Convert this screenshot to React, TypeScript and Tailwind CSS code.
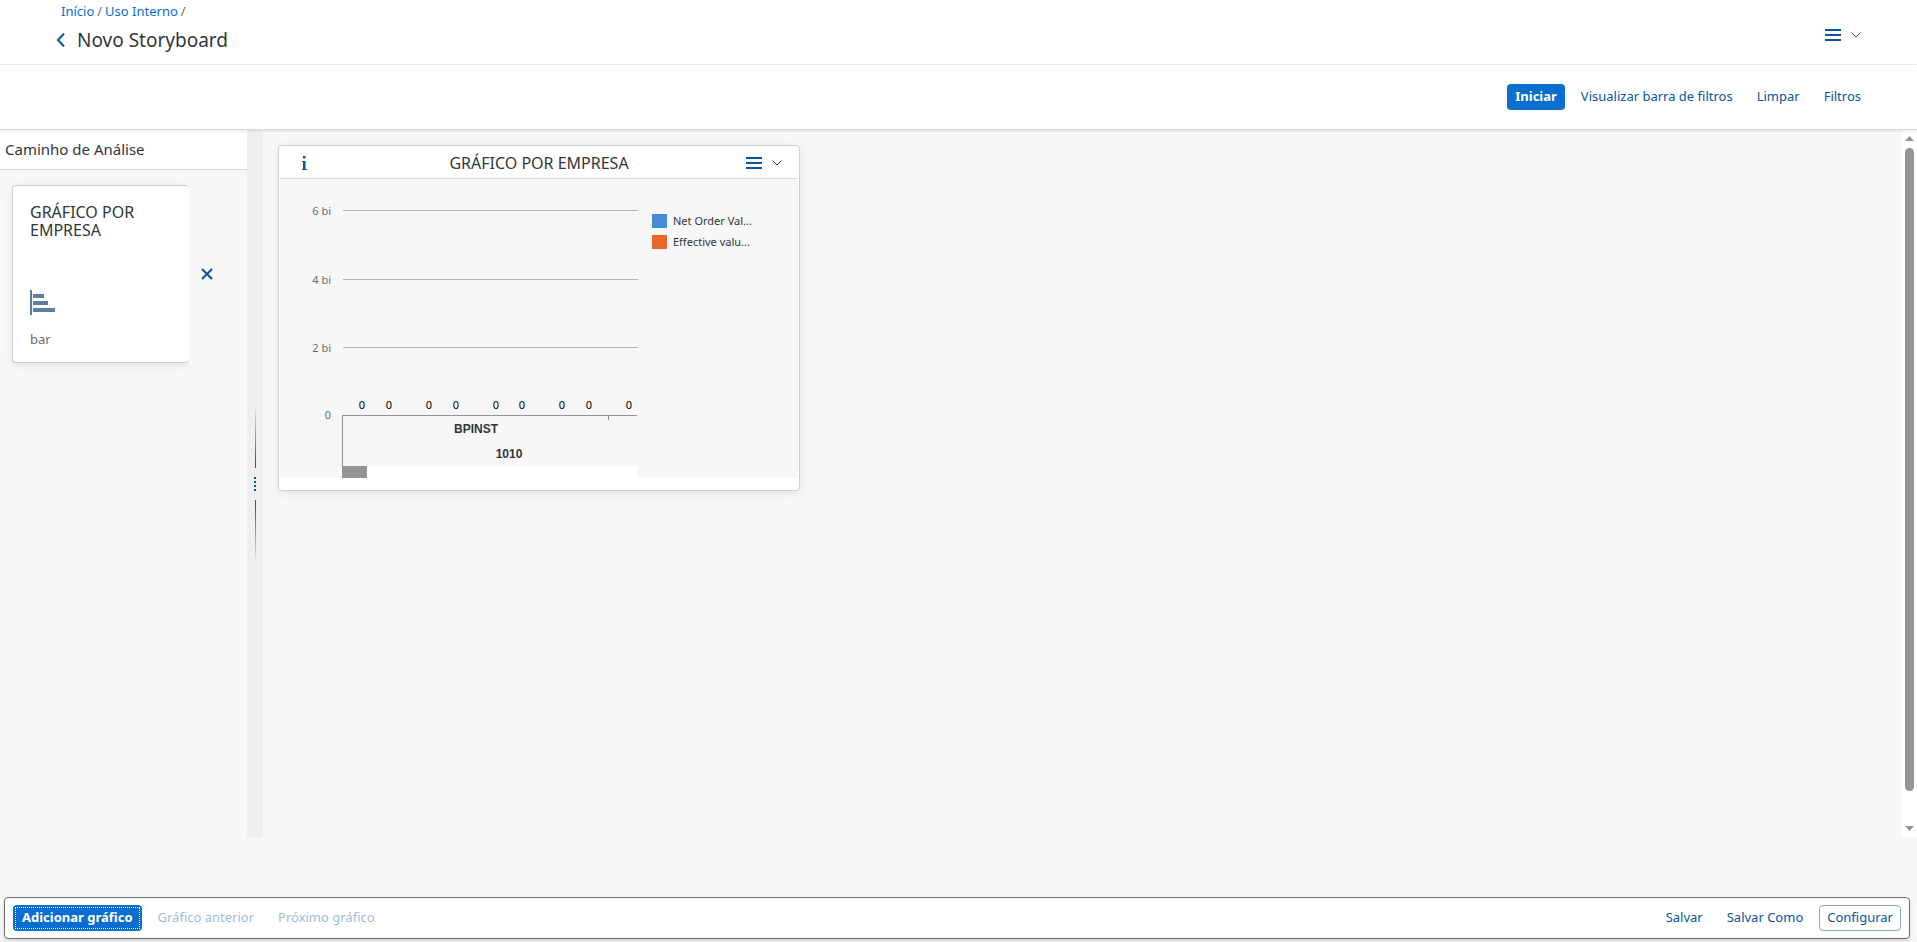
import type { ReactNode } from 'react';

const VALUE_LABEL_X = [82, 109, 149, 176, 216, 242, 282, 309, 349];

const GRID_LINES = [
  { label: '6 bi', y: 31 },
  { label: '4 bi', y: 100 },
  { label: '2 bi', y: 168 },
];

function MenuButton({ label }: { label: string }) {
  return (
    <button type="button" aria-label={label} className="flex h-6 items-center gap-2.5">
      <svg width="16" height="12" viewBox="0 0 16 12" aria-hidden="true">
        <path d="M0 1h16M0 6h16M0 11h16" stroke="#0854a0" strokeWidth="2" />
      </svg>
      <svg width="10" height="6" viewBox="0 0 10 6" aria-hidden="true">
        <path d="M0.5 0.5L5 5L9.5 0.5" fill="none" stroke="#0854a0" />
      </svg>
    </button>
  );
}

function TextButton({ children, disabled = false }: { children: ReactNode; disabled?: boolean }) {
  return (
    <button
      type="button"
      disabled={disabled}
      className="h-[26px] rounded px-2 text-[#0854a0] disabled:opacity-40"
    >
      {children}
    </button>
  );
}

function BarChart() {
  return (
    <svg
      width="518"
      height="299"
      viewBox="0 0 518 299"
      className="block bg-[#f7f7f7]"
      role="img"
      aria-label="GRÁFICO POR EMPRESA"
      fontFamily="'Noto Sans', sans-serif"
      fontSize="11"
    >
      {GRID_LINES.map((line) => (
        <g key={line.label}>
          <rect x="63" y={line.y} width="295" height="1" fill="#b0b3b8" />
          <text x="51" y={line.y + 5} textAnchor="end" fill="#6a6d70">
            {line.label}
          </text>
        </g>
      ))}
      <text x="51" y="240" textAnchor="end" fill="#6a6d70">
        0
      </text>
      {VALUE_LABEL_X.map((x) => (
        <text key={x} x={x} y="230" textAnchor="middle" fill="#000">
          0
        </text>
      ))}
      <path d="M62 236h295v1h-28v4h-1v-4H63v50h-1z" fill="#8f949b" />
      <g fontFamily="'Liberation Sans', Arial, sans-serif" fontWeight="700" fontSize="12" textAnchor="middle" fill="#32363a">
        <text x="196" y="254">BPINST</text>
        <text x="229" y="279">1010</text>
      </g>
      <rect x="62" y="287" width="295" height="12" fill="#fff" />
      <rect x="62" y="287" width="25" height="12" fill="#949494" />
      <rect x="372" y="35" width="15" height="14" fill="#448cd8" />
      <rect x="372" y="56" width="15" height="14" fill="#e8682c" />
      <g fill="#32363a">
        <text x="393" y="46">Net Order Val...</text>
        <text x="393" y="67">Effective valu...</text>
      </g>
    </svg>
  );
}

function Scrollbar() {
  return (
    <div className="flex w-[15px] shrink-0 flex-col items-center bg-white py-1.5" aria-hidden="true">
      <svg width="9" height="5" viewBox="0 0 9 5">
        <path d="M4.5 0L9 5H0z" fill="#949494" />
      </svg>
      <div className="mt-[7px] mb-[35px] w-[9px] flex-1 rounded-full bg-[#949494]" />
      <svg width="9" height="5" viewBox="0 0 9 5">
        <path d="M4.5 5L9 0H0z" fill="#949494" />
      </svg>
    </div>
  );
}

export default function App() {
  return (
    <div className="flex h-screen flex-col bg-[#f7f7f7] font-['Noto_Sans',sans-serif] text-[13px] text-[#32363a]">
      <header className="flex h-[65px] shrink-0 justify-between border-b border-[#eeeeee] bg-white pr-14 pl-14">
        <div>
          <nav aria-label="Breadcrumb" className="flex gap-[3px] pt-px pl-[5px] leading-5 text-[#6a6d70]">
            <a href="#inicio" className="text-[#0a6ed1]">Início</a>
            <span>/</span>
            <a href="#uso-interno" className="text-[#0a6ed1]">Uso Interno</a>
            <span>/</span>
          </nav>
          <div className="mt-[5px] flex items-center gap-3">
            <button type="button" aria-label="Voltar">
              <svg width="9" height="14" viewBox="0 0 9 14" aria-hidden="true">
                <path d="M8 0.500L2 7l6 6.500" fill="none" stroke="#0854a0" strokeWidth="2" />
              </svg>
            </button>
            <h1 className="text-[19px] leading-7">Novo Storyboard</h1>
          </div>
        </div>
        <div className="pt-[23px]">
          <MenuButton label="Menu do storyboard" />
        </div>
      </header>

      <section className="relative flex h-[65px] shrink-0 items-center justify-end gap-2 border-b border-[#d9d9d9] bg-white pr-12 shadow-[0_1px_3px_rgba(0,0,0,0.1)]">
        <button type="button" className="h-[26px] rounded bg-[#0a6ed1] px-2 font-bold text-white">
          Iniciar
        </button>
        <TextButton>Visualizar barra de filtros</TextButton>
        <TextButton>Limpar</TextButton>
        <TextButton>Filtros</TextButton>
      </section>

      <div className="mb-[60px] flex min-h-0 flex-1">
        <aside className="w-[247px] shrink-0">
          <h2 className="flex h-10 items-center border-b border-[#d9d9d9] bg-white px-[5px] text-[15px]">
            Caminho de Análise
          </h2>
          <div className="flex items-center">
            <div className="overflow-hidden py-[15px] pl-3">
              <div className="flex h-[178px] w-[177px] flex-col rounded border border-r-0 border-[#d0d0d0] bg-white px-[17px] pt-[17px] pb-[13px] shadow-[0_2px_8px_rgba(0,0,0,0.08)]">
                <h3 className="text-base leading-[18px]">GRÁFICO POR EMPRESA</h3>
                <svg width="25" height="25" viewBox="0 0 25 25" className="mt-auto" aria-hidden="true">
                  <g fill="#5a7fa5">
                    <rect x="0" y="0" width="2" height="25" />
                    <rect x="3" y="4" width="11" height="4" />
                    <rect x="3" y="11" width="15" height="4" />
                    <rect x="3" y="18" width="22" height="4" />
                  </g>
                </svg>
                <p className="mt-3.5 leading-5 text-[#6a6d70]">bar</p>
              </div>
            </div>
            <button type="button" aria-label="Remover" className="ml-3">
              <svg width="12" height="12" viewBox="0 0 12 12" aria-hidden="true">
                <path d="M1 1l10 10M11 1L1 11" stroke="#0854a0" strokeWidth="2" />
              </svg>
            </button>
          </div>
        </aside>

        <div className="flex w-4 shrink-0 flex-col items-center justify-center gap-[9px] bg-[#edeff0]" role="separator" aria-orientation="vertical">
          <div className="h-16 w-px bg-linear-to-b from-transparent to-[#0854a0]" />
          <svg width="2" height="14" viewBox="0 0 2 14" aria-hidden="true">
            <path d="M0 0h2v2H0zM0 4h2v2H0zM0 8h2v2H0zM0 12h2v2H0z" fill="#0854a0" />
          </svg>
          <div className="h-16 w-px bg-linear-to-b from-[#0854a0] to-transparent" />
        </div>

        <main className="min-w-0 flex-1 p-[15px]">
          <article className="w-[522px] rounded border border-[#d0d0d0] bg-white px-px pb-3 shadow-[0_2px_8px_rgba(0,0,0,0.08)]">
            <header className="flex h-[33px] items-center border-b border-[#d9d9d9] pt-0.5">
              <div className="flex w-20 pl-[22px]">
                <button type="button" aria-label="Informações">
                  <svg width="5" height="14" viewBox="0 0 5 14" aria-hidden="true">
                    <path d="M1 0h2.500v2.500H1zM0 5h3.500v8H5v1H0v-1h1V6H0z" fill="#0854a0" />
                  </svg>
                </button>
              </div>
              <h2 className="flex-1 text-center text-base">GRÁFICO POR EMPRESA</h2>
              <div className="flex w-20 justify-end pr-4">
                <MenuButton label="Menu do gráfico" />
              </div>
            </header>
            <BarChart />
          </article>
        </main>
        <Scrollbar />
      </div>

      <footer className="mr-[7px] mb-[3px] ml-1 flex h-[42px] shrink-0 items-center gap-2 rounded border border-[#6a6d70] bg-white px-2 shadow-md">
        <button type="button" className="h-[26px] rounded bg-[#0a6ed1] p-0.5 font-bold text-white">
          <span className="flex h-full items-center border border-dotted border-white px-1.5">Adicionar gráfico</span>
        </button>
        <TextButton disabled>Gráfico anterior</TextButton>
        <TextButton disabled>Próximo gráfico</TextButton>
        <div className="flex-1" />
        <TextButton>Salvar</TextButton>
        <TextButton>Salvar Como</TextButton>
        <button type="button" className="h-[26px] rounded border border-[#84a9cf] px-[7px] text-[#0854a0]">
          Configurar
        </button>
      </footer>
    </div>
  );
}
